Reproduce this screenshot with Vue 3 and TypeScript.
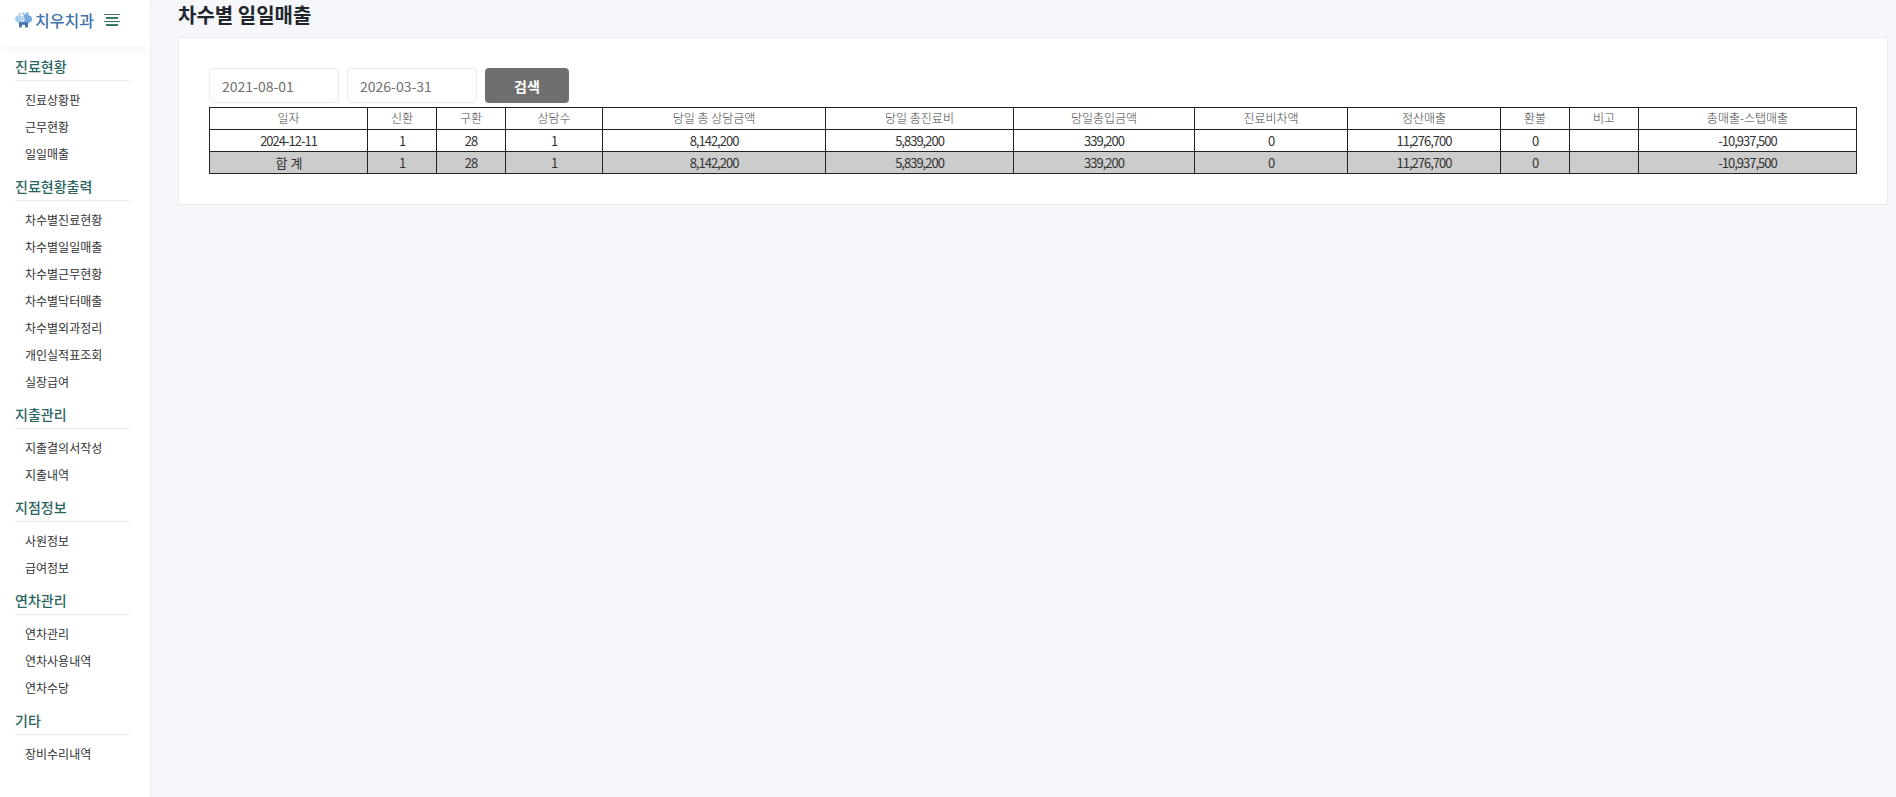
<script setup lang="ts">
const groups = [
  { title: '진료현황', items: ['진료상황판', '근무현황', '일일매출'] },
  { title: '진료현황출력', items: ['차수별진료현황', '차수별일일매출', '차수별근무현황', '차수별닥터매출', '차수별외과정리', '개인실적표조회', '실장급여'] },
  { title: '지출관리', items: ['지출결의서작성', '지출내역'] },
  { title: '지점정보', items: ['사원정보', '급여정보'] },
  { title: '연차관리', items: ['연차관리', '연차사용내역', '연차수당'] },
  { title: '기타', items: ['장비수리내역'] },
]
const columns = [
  { label: '일자', width: 158 },
  { label: '신환', width: 69 },
  { label: '구환', width: 69 },
  { label: '상담수', width: 97 },
  { label: '당일 총 상담금액', width: 223 },
  { label: '당일 총진료비', width: 188 },
  { label: '당일총입금액', width: 181 },
  { label: '진료비차액', width: 153 },
  { label: '정산매출', width: 153 },
  { label: '환불', width: 69 },
  { label: '비고', width: 69 },
  { label: '총매출-스탭매출', width: 218 },
]
const daily = ['2024-12-11', '1', '28', '1', '8,142,200', '5,839,200', '339,200', '0', '11,276,700', '0', '', '-10,937,500']
const total = ['합 계', '1', '28', '1', '8,142,200', '5,839,200', '339,200', '0', '11,276,700', '0', '', '-10,937,500']
</script>

<template>
  <div class="page">
    <aside class="sidebar">
      <div class="brand">
        <svg class="logo" width="17" height="17" viewBox="0 0 18 17">
          <path d="M0 8 C0 5.500 2 4 4 4 L4 1 L6 1 L6 3 L8 3 L8 0.500 L10 0.500 L10 3 L12 3 L12 1 L14 1 L14 4 C16.500 4.500 18 6 18 8 C18 10.500 16 12 13 12 L5 12 C2 12 0 10.500 0 8 Z" fill="#a5cbee" />
          <path d="M10 3 L12 3 L12 1 L14 1 L14 4 C16.500 4.500 18 6 18 8 C18 10.500 16 12 13 12 L10 12 Z" fill="#74a9de" />
          <path d="M5 3.500 L9 3.500 L9 5 L5 5 Z" fill="#fff" />
          <circle cx="8" cy="8" r="2" fill="#fff" />
          <circle cx="8" cy="8" r="0.900" fill="#4f86c2" />
          <path d="M4 11.500 L14 11.500 L13.500 17 L11 17 L10.500 14 L7.500 14 L7 17 L4.500 17 Z" fill="#3f72ad" />
        </svg>
        <span class="brand-name">치우치과</span>
        <span class="burger"><i class="wide"></i><i class="narrow"></i><i class="wide"></i><i class="narrow"></i></span>
      </div>
      <nav class="nav">
        <section v-for="g in groups" :key="g.title" class="group">
          <h3 class="group-title">{{ g.title }}</h3>
          <ul class="group-list">
            <li v-for="item in g.items" :key="item">{{ item }}</li>
          </ul>
        </section>
      </nav>
    </aside>
    <main class="main">
      <h1 class="title">차수별 일일매출</h1>
      <div class="card">
        <div class="search">
          <input class="field" value="2021-08-01" />
          <input class="field" value="2026-03-31" />
          <button class="btn" type="button">검색</button>
        </div>
        <table class="grid">
          <colgroup>
            <col v-for="c in columns" :key="c.label" :style="{ width: c.width + 'px' }" />
          </colgroup>
          <thead>
            <tr><th v-for="c in columns" :key="c.label">{{ c.label }}</th></tr>
          </thead>
          <tbody>
            <tr><td v-for="(v, i) in daily" :key="i">{{ v }}</td></tr>
            <tr class="sum"><td v-for="(v, i) in total" :key="i">{{ v }}</td></tr>
          </tbody>
        </table>
      </div>
    </main>
  </div>
</template>

<style>
html, body { margin: 0; background: #f5f7fb; }
</style>

<style scoped>
.page {
  display: flex;
  min-height: 797px;
  font-family: "Noto Sans CJK KR", "Noto Sans", sans-serif;
  background: #f5f7fb;
}
.sidebar {
  width: 150px;
  flex: none;
  background: #fff;
  border-right: 1px solid #e6ecf1;
}
.brand {
  height: 46px;
  box-sizing: border-box;
  padding: 0 0 7px 15px;
  display: flex;
  align-items: center;
  box-shadow: 0 6px 8px -2px #f3f6fa;
}
.logo { flex: none; }
.brand-name {
  margin-left: 3px;
  font-size: 16px;
  line-height: 20px;
  font-weight: 500;
  color: #3f73ab;
  white-space: nowrap;
}
.burger {
  margin-left: 10px;
  width: 16px;
  display: flex;
  flex-direction: column;
  align-items: center;
  gap: 2px;
}
.burger i { display: block; height: 1.5px; background: #3f7a68; }
.wide { width: 16px; }
.narrow { width: 12px; }
.nav { padding: 8px 20px 0 15px; }
.group-title {
  margin: 0;
  height: 26px;
  line-height: 24px;
  font-size: 14px;
  font-weight: 500;
  color: #2a6561;
  border-bottom: 1px solid #e6ecf1;
}
.group-list {
  list-style: none;
  margin: 0;
  padding: 5px 0 7px 10px;
}
.group-list li {
  height: 27px;
  line-height: 27px;
  font-size: 12px;
  color: #333;
  white-space: nowrap;
}
.main {
  flex: 1;
  min-width: 0;
  padding: 0 8px 0 27px;
}
.title {
  margin: 0;
  height: 37px;
  line-height: 30px;
  font-size: 20px;
  font-weight: 700;
  color: #22262b;
}
.card {
  background: #fff;
  border: 1px solid #e6ecf1;
  padding: 30px 30px 30px 30px;
  height: 168px;
  box-sizing: border-box;
}
.search {
  display: flex;
  gap: 8px;
  margin-bottom: 4px;
}
.field {
  width: 130px;
  height: 35px;
  box-sizing: border-box;
  border: 1px solid #e6ecf1;
  border-radius: 4px;
  padding: 0 12px;
  font-family: inherit;
  font-size: 14px;
  color: #707070;
  background: #fff;
  outline: none;
}
.btn {
  width: 84px;
  height: 35px;
  border: 0;
  border-radius: 4px;
  background: #6f6f6f;
  color: #fff;
  font-family: inherit;
  font-size: 14px;
  font-weight: 700;
}
.grid {
  width: 1647px;
  table-layout: fixed;
  border-collapse: collapse;
  border: 1px solid #222;
}
.grid th, .grid td {
  height: 22px;
  padding: 0;
  border: 1px solid #222;
  text-align: center;
  line-height: 18px;
  box-sizing: border-box;
  overflow: hidden;
}
.grid th {
  padding-bottom: 1px;
  font-size: 12px;
  font-weight: 300;
  color: #444;
}
.grid td {
  font-size: 13px;
  font-weight: 400;
  letter-spacing: -1px;
  word-spacing: 2px;
  color: #333;
}
.sum td { background: #ccc; }
</style>
